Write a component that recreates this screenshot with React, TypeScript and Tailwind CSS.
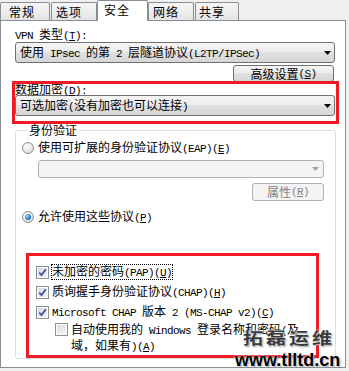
import React from "react";

const CJK = /[\u2e80-\u9fff\u3000-\u303f\uff00-\uffef]/;

// CJK stays in the CJK face; latin runs get a half-width mono like SimSun. "&X" underlines X.
function T({ s }: { s: string }) {
  const runs: { t: string; cjk: boolean; u: boolean }[] = [];
  for (let i = 0; i < s.length; i++) {
    let ch = s[i];
    let u = false;
    if (ch === "&" && i + 1 < s.length) {
      u = true;
      ch = s[++i];
    }
    const cjk = CJK.test(ch);
    const last = runs[runs.length - 1];
    if (last && last.cjk === cjk && last.u === u) last.t += ch;
    else runs.push({ t: ch, cjk, u });
  }
  return (
    <>
      {runs.map((r, i) => {
        const cls = r.cjk ? "" : "font-['Liberation_Mono'] text-[11px] tracking-[-0.6px]";
        return r.u ? (
          <u key={i} className={cls + " underline-offset-1"}>
            {r.t}
          </u>
        ) : (
          <span key={i} className={cls}>
            {r.t}
          </span>
        );
      })}
    </>
  );
}

function Arrow({ color }: { color: string }) {
  return (
    <svg width="7" height="4" viewBox="0 0 7 4">
      <path d="M0 0H7L3.5 4Z" fill={color} />
    </svg>
  );
}

function Radio({ on }: { on?: boolean }) {
  return (
    <span className="w-[12px] h-[12px] shrink-0 rounded-full border border-[#8e8f8f] bg-[radial-gradient(circle_at_35%_30%,#ffffff,#e6e6e6_60%,#cfcfcf)] flex items-center justify-center">
      {on && (
        <span className="w-[6px] h-[6px] rounded-full bg-[radial-gradient(circle_at_35%_35%,#a8dcff,#2a7fd6_55%,#0b3f86)]" />
      )}
    </span>
  );
}

function Check({ on }: { on?: boolean }) {
  return (
    <span className="w-[13px] h-[13px] shrink-0 border border-[#8e8f8f] bg-white p-[1px] flex">
      <span className="flex-1 bg-[linear-gradient(135deg,#d8dbe0,#f4f5f7)] flex items-center justify-center">
        {on && (
          <svg width="9" height="9" viewBox="0 0 9 9">
            <path d="M1.2 4.6L3.5 7L7.8 1.4" fill="none" stroke="#3d5797" strokeWidth="1.8" />
          </svg>
        )}
      </span>
    </span>
  );
}

export default function App() {
  const tabBase =
    "h-[18px] border-t border-l border-r border-[#898c95] rounded-t-[2px] bg-[linear-gradient(to_bottom,#f6f6f6,#e4e4e4)] pt-[2px] leading-[14px] tracking-[1px]";
  return (
    <div className="relative w-[349px] h-[371px] overflow-hidden bg-[#f0f0f0] text-[12px] text-black font-['Noto_Sans_CJK_SC',sans-serif]">
      {/* tab strip */}
      <div className="flex items-end h-[20px]">
        <div className={tabBase + " w-[50px] pl-[8px]"}>常规</div>
        <div className={tabBase + " w-[46px] ml-[1px] pl-[4px]"}>选项</div>
        <div className="relative z-10 mb-[-1px] h-[21px] w-[51px] border-t border-l border-r border-[#898c95] rounded-t-[2px] bg-white pt-[2px] pl-[6px] leading-[14px] tracking-[1px]">
          安全
        </div>
        <div className={tabBase + " w-[46px] pl-[4px]"}>网络</div>
        <div className={tabBase + " w-[44px] ml-[1px] pl-[3px]"}>共享</div>
      </div>

      {/* page */}
      <div className="w-[346px] h-[348px] border border-[#898c95] bg-white pt-[6px] pl-[14px]">
        <div className="h-[14px] leading-[14px]">
          <T s="VPN 类型(&T):" />
        </div>
        <div className="mt-[1px] w-[320px] h-[21px] border border-[#707070] rounded-[3px] bg-[linear-gradient(to_bottom,#f4f4f4,#ececec_50%,#e0e0e0_50%,#d6d6d6)] pl-[4px] pr-[3px] flex items-center justify-between leading-[14px]">
          <span>
            <T s="使用 IPsec 的第 2 层隧道协议(L2TP/IPSec)" />
          </span>
          <Arrow color="#000" />
        </div>
        <div className="w-[319px] mt-[2px] flex justify-end">
          <div className="w-[101px] h-[17px] border border-[#707070] rounded-[3px] bg-[linear-gradient(to_bottom,#f4f4f4,#ececec_50%,#e0e0e0_50%,#d6d6d6)] flex items-center justify-center leading-[14px]">
            <T s="高级设置(&S)" />
          </div>
        </div>

        <div className="h-[13px] leading-[13px]">
          <T s="数据加密(&D):" />
        </div>
        <div className="w-[320px] h-[21px] border border-[#707070] rounded-[3px] bg-[linear-gradient(to_bottom,#f4f4f4,#ececec_50%,#e0e0e0_50%,#d6d6d6)] pl-[4px] pr-[3px] flex items-center justify-between leading-[14px]">
          <span>
            <T s="可选加密(没有加密也可以连接)" />
          </span>
          <Arrow color="#000" />
        </div>

        <fieldset className="mt-[7px] w-[321px] border border-[#d5dfe5] rounded-[3px] pl-[6px] pb-[4px]">
          <legend className="ml-[5px] px-[2px] leading-[14px]">身份验证</legend>

          <div className="mt-[4px] h-[14px] flex items-center gap-[4px] leading-[14px]">
            <Radio />
            <span>
              <T s="使用可扩展的身份验证协议(EAP)(&E)" />
            </span>
          </div>
          <div className="ml-[16px] mt-[5px] w-[286px] h-[18px] border border-[#adb2b5] rounded-[3px] bg-[#f4f4f4] pr-[4px] flex items-center justify-end">
            <Arrow color="#a3a3a3" />
          </div>
          <div className="ml-[16px] mt-[5px] w-[286px] flex justify-end">
            <div className="w-[72px] h-[18px] border border-[#adb2b5] rounded-[3px] bg-[#f4f4f4] text-[#838383] flex items-center justify-center leading-[14px]">
              <T s="属性(&R)" />
            </div>
          </div>

          <div className="mt-[9px] h-[14px] flex items-center gap-[4px] leading-[14px]">
            <Radio on />
            <span>
              <T s="允许使用这些协议(&P)" />
            </span>
          </div>

          <div className="ml-[14px] mt-[41px] h-[14px] flex items-center gap-[2px]">
            <Check on />
            <span className="border border-dotted border-black leading-[12px]">
              <T s="未加密的密码(PAP)(&U)" />
            </span>
          </div>
          <div className="ml-[14px] mt-[6px] h-[14px] flex items-center gap-[2px]">
            <Check on />
            <span className="border border-transparent leading-[12px]">
              <T s="质询握手身份验证协议(CHAP)(&H)" />
            </span>
          </div>
          <div className="ml-[14px] mt-[6px] h-[14px] flex items-center gap-[2px]">
            <Check on />
            <span className="border border-transparent leading-[12px]">
              <T s="Microsoft CHAP 版本 2 (MS-CHAP v2)(&C)" />
            </span>
          </div>
          <div className="ml-[33px] mt-[3px] flex items-start gap-[3px]">
            <span className="mt-[1px]">
              <Check />
            </span>
            <span className="leading-[13px]">
              <T s="自动使用我的 Windows 登录名称和密码(及" />
              <br />
              <T s="域，如果有)(&A)" />
            </span>
          </div>
        </fieldset>
      </div>

      {/* red annotation frames */}
      <div className="absolute left-[12px] top-[81px] w-[327px] h-[43px] border-[3px] border-[#ed1c24]" />
      <div className="absolute left-[26px] top-[253px] w-[293px] h-[105px] border-[3px] border-[#ed1c24]" />

      {/* watermark */}
      <div className="absolute left-[235px] top-[330px] w-[114px]">
        <div className="ml-[8px] h-[18px] origin-top scale-y-[0.8] text-[20px] leading-[20px] font-bold tracking-[3px] text-[#3a3a3a] [text-shadow:0_0_2px_#fff,0_0_2px_#fff,1px_1px_2px_#777]">
          拓磊运维
        </div>
        <div className="mt-[3px] font-['Liberation_Sans'] text-[18px] leading-[18px] font-bold text-black [text-shadow:0_0_2px_#fff,0_0_2px_#fff,1px_1px_2px_#777]">
          www.tlltd.cn
        </div>
      </div>
    </div>
  );
}
